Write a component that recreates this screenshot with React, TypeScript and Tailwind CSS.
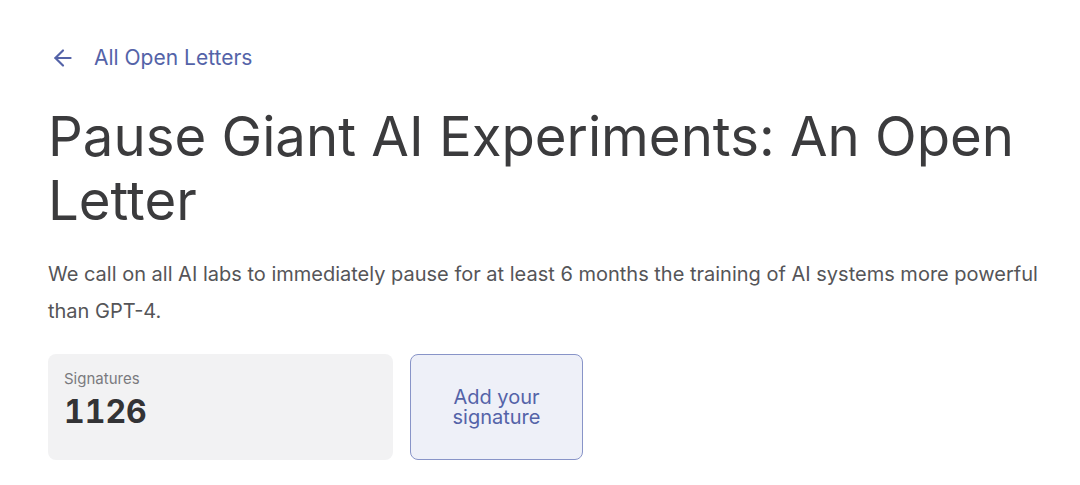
import React from 'react';

const App: React.FC = () => {
  return (
    <div className="min-h-screen w-full bg-white font-['Inter',sans-serif]">
      <div className="pl-12 pr-[30px] pt-[44px]">
        <a href="#" className="flex items-center gap-[18px] text-[21px] leading-[28px] text-[#5463a8]">
          <svg width="26" height="26" viewBox="0 0 24 24" fill="none" stroke="currentColor" strokeWidth="2" strokeLinecap="round" strokeLinejoin="round" className="ml-[2px]">
            <path d="M19 12H5" />
            <path d="M12 19l-7-7 7-7" />
          </svg>
          <span>All Open Letters</span>
        </a>

        <h1 className="mt-[32px] text-[54.5px] leading-[64px] font-normal text-[#3b3b3d]">
          Pause Giant AI Experiments: An Open Letter
        </h1>

        <p className="mt-[24px] text-[20px] leading-[37px] text-[#555558]">
          We call on all AI labs to immediately pause for at least 6 months the training of AI systems more powerful than GPT-4.
        </p>

        <div className="mt-[24px] flex gap-[17px]">
          <div className="w-[345px] h-[106px] rounded-lg bg-[#f2f2f3] px-4 pt-[15px]">
            <div className="text-[15px] leading-5 text-[#7a7a7e]">Signatures</div>
            <div className="mt-[3px] text-[32px] leading-[40px] font-bold tabular-nums text-[#333335]">1126</div>
          </div>
          <button className="w-[173px] h-[106px] rounded-lg border border-[#8894c8] bg-[#eef0f8] text-[20px] leading-5 text-[#5463a8] flex items-center justify-center text-center">
            Add your<br />signature
          </button>
        </div>
      </div>
    </div>
  );
};

export default App;
